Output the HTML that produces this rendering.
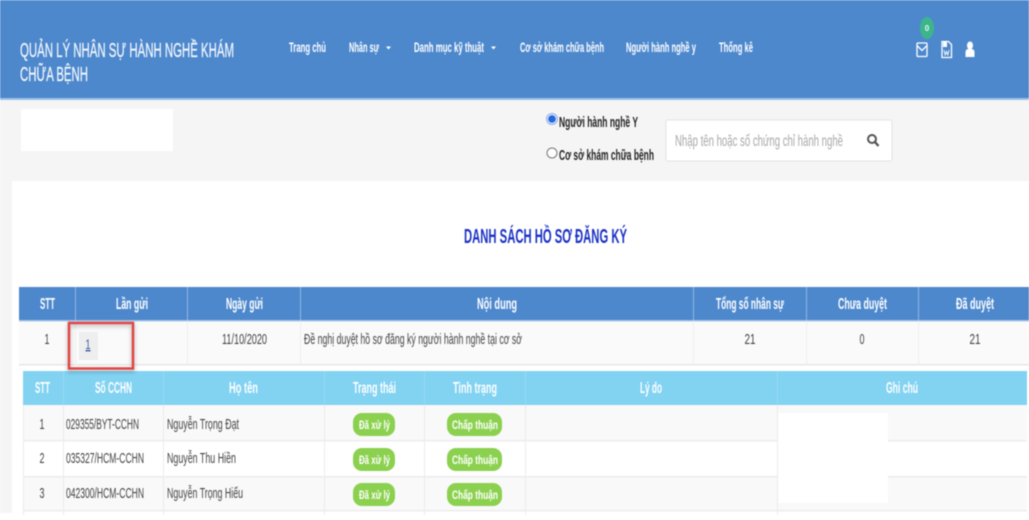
<!DOCTYPE html>
<html lang="vi"><head><meta charset="utf-8"><title>Danh sách hồ sơ đăng ký</title>
<style>
html,body{margin:0;padding:0;background:#fff;width:1029px;height:520px;overflow:hidden}
svg{display:block;filter:blur(.45px)}
text{font-family:"Liberation Sans","Noto Sans CJK SC",sans-serif}
.n{font-size:13.5px;font-weight:700;fill:#fff}
.h{font-size:15.5px;font-weight:700;fill:#fff}
.c{font-size:14.5px;fill:#444}
.p{font-size:12px;font-weight:700;fill:#fff}
.b{font-size:14.5px;font-weight:700;fill:#222}
</style></head><body>
<svg width="1029" height="520" viewBox="0 0 1029 520" xmlns="http://www.w3.org/2000/svg">
<defs><filter id="s" x="-20%" y="-20%" width="140%" height="150%"><feDropShadow dx="0" dy="2" stdDeviation="2" flood-color="#000" flood-opacity=".3"/></filter></defs>
<rect width="1029" height="520" fill="#fff"/>
<rect width="1029" height="181" fill="#f5f5f5"/>
<rect y="181" width="12" height="332" fill="#f5f5f5"/>
<rect width="1029" height="98" fill="#4d88cd"/>
<rect width="1029" height="1" fill="#5b93d3"/>
<rect y="98" width="1029" height="2" fill="#9cc0e8"/>

<text x="20" y="57" font-size="20.5" fill="#f2f7fc" stroke="#f2f7fc" stroke-width=".25" textLength="214" lengthAdjust="spacingAndGlyphs">QUẢN LÝ NHÂN SỰ HÀNH NGHỀ KHÁM</text>
<text x="20" y="81" font-size="20.5" fill="#f2f7fc" stroke="#f2f7fc" stroke-width=".25" textLength="68" lengthAdjust="spacingAndGlyphs">CHỮA BỆNH</text>

<text class="n" x="289" y="52" textLength="37" lengthAdjust="spacingAndGlyphs">Trang chủ</text>
<text class="n" x="349" y="52" textLength="30" lengthAdjust="spacingAndGlyphs">Nhân sự</text>
<path d="M386 46.500h5l-2.500 3z" fill="#fff"/>
<text class="n" x="414" y="52" textLength="70" lengthAdjust="spacingAndGlyphs">Danh mục kỹ thuật</text>
<path d="M491 46.500h5l-2.500 3z" fill="#fff"/>
<text class="n" x="520" y="52" textLength="84" lengthAdjust="spacingAndGlyphs">Cơ sở khám chữa bệnh</text>
<text class="n" x="626" y="52" textLength="70" lengthAdjust="spacingAndGlyphs">Người hành nghề y</text>
<text class="n" x="719" y="52" textLength="34" lengthAdjust="spacingAndGlyphs">Thống kê</text>

<ellipse cx="927" cy="28" rx="7" ry="11" fill="#3cb58c"/>
<text x="927" y="31" font-size="8" font-weight="700" fill="#e8f8f0" text-anchor="middle">0</text>
<rect x="917" y="43" width="10" height="13.500" rx="1" fill="none" stroke="#fff" stroke-width="1.300"/>
<path d="M917.500 46l4.500 4.500 4.500-4.500" fill="none" stroke="#fff" stroke-width="1.300"/>
<path d="M942 41.500h6.500l3 3v13h-9.500z" fill="none" stroke="#fff" stroke-width="1.300"/>
<rect x="943" y="42" width="4" height="5" fill="#fff"/>
<path d="M944 50l1.200 5 1.300-3.500 1.300 3.500 1.200-5" fill="none" stroke="#fff" stroke-width=".9"/>
<ellipse cx="970" cy="45.500" rx="3" ry="4" fill="#fff"/>
<path d="M965.500 57v-4.500q0-3.500 3-3.500h3q3 0 3 3.500v4.500z" fill="#fff"/>

<rect x="21" y="109" width="152" height="42" fill="#fff"/>

<circle cx="552" cy="119" r="5.500" fill="#dbe8fb" stroke="#8fb0ea"/>
<circle cx="552" cy="119" r="3.800" fill="#2468dc"/>
<text class="b" x="559" y="127" textLength="79" lengthAdjust="spacingAndGlyphs">Người hành nghề Y</text>
<circle cx="552" cy="153" r="5" fill="#fff" stroke="#777"/>
<text class="b" x="559" y="160" textLength="95" lengthAdjust="spacingAndGlyphs">Cơ sở khám chữa bệnh</text>

<rect x="666" y="120" width="226" height="41" rx="2" fill="#fff" stroke="#e3e3e3"/>
<text x="675" y="146" font-size="16" fill="#a8a8a8" textLength="168" lengthAdjust="spacingAndGlyphs">Nhập tên hoặc số chứng chỉ hành nghề</text>
<circle cx="872" cy="139" r="4" fill="none" stroke="#555" stroke-width="2"/>
<path d="M875 142l3.500 4" stroke="#555" stroke-width="2.300"/>

<text x="464" y="243" font-size="20" font-weight="700" fill="#1c32c4" textLength="163" lengthAdjust="spacingAndGlyphs">DANH SÁCH HỒ SƠ ĐĂNG KÝ</text>

<!-- outer table -->
<rect x="19" y="321" width="1010" height="44" fill="#fafafa"/>
<rect x="19" y="287" width="1010" height="34" fill="#4d88cd"/>
<rect x="19" y="320" width="1010" height="1.500" fill="#a9c6e8"/>
<rect x="19" y="364" width="1010" height="1.500" fill="#e6e6e6"/>
<g fill="#8db4e2"><rect x="75" y="287" width="1" height="33"/><rect x="187" y="287" width="1" height="33"/><rect x="300" y="287" width="1" height="33"/><rect x="693" y="287" width="1" height="33"/><rect x="806" y="287" width="1" height="33"/><rect x="918" y="287" width="1" height="33"/></g>
<g fill="#eee"><rect x="75" y="321" width="1" height="44"/><rect x="187" y="321" width="1" height="44"/><rect x="300" y="321" width="1" height="44"/><rect x="693" y="321" width="1" height="44"/><rect x="806" y="321" width="1" height="44"/><rect x="918" y="321" width="1" height="44"/></g>
<text class="h" x="40" y="309" textLength="15" lengthAdjust="spacingAndGlyphs">STT</text>
<text class="h" x="116" y="309" textLength="32" lengthAdjust="spacingAndGlyphs">Lần gửi</text>
<text class="h" x="226" y="309" textLength="37" lengthAdjust="spacingAndGlyphs">Ngày gửi</text>
<text class="h" x="477" y="309" textLength="40" lengthAdjust="spacingAndGlyphs">Nội dung</text>
<text class="h" x="716" y="309" textLength="68" lengthAdjust="spacingAndGlyphs">Tổng số nhân sự</text>
<text class="h" x="838" y="309" textLength="49" lengthAdjust="spacingAndGlyphs">Chưa duyệt</text>
<text class="h" x="956" y="309" textLength="38" lengthAdjust="spacingAndGlyphs">Đã duyệt</text>

<text class="c" x="44.500" y="344" textLength="5" lengthAdjust="spacingAndGlyphs">1</text>
<text class="c" x="222" y="344" textLength="45" lengthAdjust="spacingAndGlyphs">11/10/2020</text>
<text class="c" x="304" y="344" textLength="218" lengthAdjust="spacingAndGlyphs">Đề nghị duyệt hồ sơ đăng ký người hành nghề tại cơ sở</text>
<text class="c" x="744.500" y="344" textLength="11" lengthAdjust="spacingAndGlyphs">21</text>
<text class="c" x="859.500" y="344" textLength="5" lengthAdjust="spacingAndGlyphs">0</text>
<text class="c" x="969.500" y="344" textLength="11" lengthAdjust="spacingAndGlyphs">21</text>

<!-- inner table -->
<rect x="23" y="405" width="1004" height="107" fill="#fff"/>
<rect x="23" y="405" width="1004" height="36" fill="#f9f9f9"/>
<rect x="23" y="476" width="1004" height="35" fill="#f9f9f9"/>
<rect x="23" y="371" width="1004" height="34" fill="#82d2f2"/>
<g fill="#ececec"><rect x="23" y="440" width="1004" height="1.500"/><rect x="23" y="476" width="1004" height="1.500"/><rect x="23" y="510" width="1004" height="1.500"/>
<rect x="23" y="405" width="1" height="110"/><rect x="63" y="405" width="1" height="110"/><rect x="163" y="405" width="1" height="110"/><rect x="324" y="405" width="1" height="110"/><rect x="424" y="405" width="1" height="110"/><rect x="525" y="405" width="1" height="110"/><rect x="777" y="405" width="1" height="110"/></g>
<g fill="#97daf5"><rect x="63" y="371" width="1" height="34"/><rect x="163" y="371" width="1" height="34"/><rect x="324" y="371" width="1" height="34"/><rect x="424" y="371" width="1" height="34"/><rect x="525" y="371" width="1" height="34"/><rect x="777" y="371" width="1" height="34"/></g>

<text class="h" x="35" y="393" textLength="15" lengthAdjust="spacingAndGlyphs">STT</text>
<text class="h" x="95" y="393" textLength="37" lengthAdjust="spacingAndGlyphs">Số CCHN</text>
<text class="h" x="229" y="393" textLength="29" lengthAdjust="spacingAndGlyphs">Họ tên</text>
<text class="h" x="353" y="393" textLength="43" lengthAdjust="spacingAndGlyphs">Trạng thái</text>
<text class="h" x="453" y="393" textLength="44" lengthAdjust="spacingAndGlyphs">Tình trạng</text>
<text class="h" x="640" y="393" textLength="22" lengthAdjust="spacingAndGlyphs">Lý do</text>
<text class="h" x="886" y="393" textLength="32" lengthAdjust="spacingAndGlyphs">Ghi chú</text>

<text class="c" x="39.500" y="429" textLength="5" lengthAdjust="spacingAndGlyphs">1</text>
<text class="c" x="66" y="429" textLength="73" lengthAdjust="spacingAndGlyphs">029355/BYT-CCHN</text>
<text class="c" x="167" y="429" textLength="72" lengthAdjust="spacingAndGlyphs">Nguyễn Trọng Đạt</text>
<text class="c" x="39.500" y="463" textLength="5" lengthAdjust="spacingAndGlyphs">2</text>
<text class="c" x="66" y="463" textLength="78" lengthAdjust="spacingAndGlyphs">035327/HCM-CCHN</text>
<text class="c" x="167" y="463" textLength="69" lengthAdjust="spacingAndGlyphs">Nguyễn Thu Hiền</text>
<text class="c" x="39.500" y="498" textLength="5" lengthAdjust="spacingAndGlyphs">3</text>
<text class="c" x="66" y="498" textLength="78" lengthAdjust="spacingAndGlyphs">042300/HCM-CCHN</text>
<text class="c" x="167" y="498" textLength="76" lengthAdjust="spacingAndGlyphs">Nguyễn Trọng Hiếu</text>

<g fill="#8bd14f">
<rect x="353" y="413" width="42" height="23" rx="9"/><rect x="447" y="413" width="55" height="23" rx="9"/>
<rect x="353" y="448" width="42" height="23" rx="9"/><rect x="447" y="448" width="55" height="23" rx="9"/>
<rect x="353" y="483" width="42" height="23" rx="9"/><rect x="447" y="483" width="55" height="23" rx="9"/>
</g>
<text class="p" x="359" y="429" textLength="31" lengthAdjust="spacingAndGlyphs">Đã xử lý</text>
<text class="p" x="452" y="429" textLength="46" lengthAdjust="spacingAndGlyphs">Chấp thuận</text>
<text class="p" x="359" y="464" textLength="31" lengthAdjust="spacingAndGlyphs">Đã xử lý</text>
<text class="p" x="452" y="464" textLength="46" lengthAdjust="spacingAndGlyphs">Chấp thuận</text>
<text class="p" x="359" y="499" textLength="31" lengthAdjust="spacingAndGlyphs">Đã xử lý</text>
<text class="p" x="452" y="499" textLength="46" lengthAdjust="spacingAndGlyphs">Chấp thuận</text>

<rect x="778" y="413" width="110" height="90" fill="#fff"/>

<!-- link + red box -->
<rect x="79" y="332" width="19" height="28" fill="#eeeeee"/>
<text x="85.500" y="349" font-size="14" fill="#3a5a9c" textLength="5" lengthAdjust="spacingAndGlyphs" text-decoration="underline">1</text>
<rect x="69" y="323" width="64" height="45.500" fill="none" stroke="#e04444" stroke-width="2.500" filter="url(#s)"/>
</svg>
</body></html>
